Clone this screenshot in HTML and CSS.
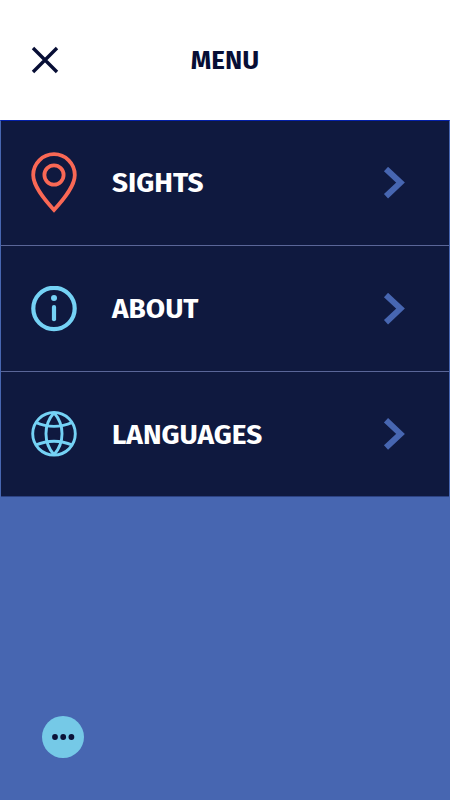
FILE: index.html
```html
<!DOCTYPE html>
<html lang="en">
<head>
    <meta charset="UTF-8">
    <meta name="viewport" content="width=device-width, initial-scale=1.0">
    <title>Menu</title>
    <link rel="stylesheet" href="styles.css">
</head>
<body>
    <header class="header">
        <button class="close-button" aria-label="Close menu">
            <svg width="28" height="28" viewBox="0 0 28 28">
                <path d="M2 2L26 26M26 2L2 26"/>
            </svg>
        </button>
        <h1>MENU</h1>
    </header>

    <nav class="menu">
        <a class="menu-item" href="#">
            <svg class="icon icon-pin" width="46" height="62" viewBox="0 0 46 62">
                <path d="M23 58C13 47 2.2 34 2.2 23A20.8 20.8 0 0 1 43.8 23C43.8 34 33 47 23 58Z"/>
                <circle cx="23" cy="23" r="9.6"/>
            </svg>
            <span class="label">SIGHTS</span>
            <svg class="arrow" width="22" height="32" viewBox="0 0 22 32">
                <path d="M3 2L17.5 15.6L3 29.2"/>
            </svg>
        </a>
        <a class="menu-item" href="#">
            <svg class="icon icon-info" width="46" height="46" viewBox="0 0 46 46">
                <circle cx="23" cy="22.5" r="20.7"/>
                <circle class="dot" cx="23" cy="12" r="3"/>
                <path d="M23 21V33.2"/>
            </svg>
            <span class="label">ABOUT</span>
            <svg class="arrow" width="22" height="32" viewBox="0 0 22 32">
                <path d="M3 2L17.5 15.6L3 29.2"/>
            </svg>
        </a>
        <a class="menu-item" href="#">
            <svg class="icon icon-globe" width="46" height="46" viewBox="0 0 46 46">
                <circle cx="23" cy="22.8" r="21.3"/>
                <path d="M23 1.8C12.3 13.8 12.3 31.8 23 43.8M23 1.8C33.7 13.8 33.7 31.8 23 43.8"/>
                <path d="M4.5 11.4Q23 19.4 41.5 11.4M4.5 34.2Q23 26.2 41.5 34.2"/>
            </svg>
            <span class="label">LANGUAGES</span>
            <svg class="arrow" width="22" height="32" viewBox="0 0 22 32">
                <path d="M3 2.3L17.5 15.9L3 29.5"/>
            </svg>
        </a>
    </nav>

    <footer class="footer">
        <button class="more-button" aria-label="More">
            <svg width="24" height="8" viewBox="0 0 24 8">
                <circle cx="4" cy="4" r="2.9"/>
                <circle cx="12.2" cy="4" r="2.9"/>
                <circle cx="20.4" cy="4" r="2.9"/>
            </svg>
        </button>
    </footer>
</body>
</html>
```

FILE: styles.css
```css
* {
    box-sizing: border-box;
}

body {
    display: flex;
    flex-direction: column;
    height: 100vh;
    margin: 0;
    font-family: "Fira Sans", "Noto Sans", sans-serif;
    background-color: #4766b1;
}

.header {
    display: grid;
    grid-template-columns: 90px 1fr 90px;
    align-items: center;
    height: 120px;
    background-color: #fff;
}

.header h1 {
    margin: 0;
    padding-top: 1px;
    color: #070e35;
    font-size: 26px;
    line-height: 34px;
    text-align: center;
}

.close-button {
    display: flex;
    justify-content: center;
    padding: 0;
    border: none;
    background: none;
    cursor: pointer;
}

.close-button path {
    fill: none;
    stroke: #070e35;
    stroke-width: 3.4;
}

.menu {
    border: 1px solid #4766b1;
    border-top-color: #0420a8;
    border-bottom: none;
}

.menu-item {
    display: flex;
    align-items: center;
    height: 126px;
    padding: 0 44px 0 30px;
    border-bottom: 1px solid #5a6698;
    background-color: #0f193f;
    color: #fff;
    text-decoration: none;
}

.menu-item:first-child {
    height: 125px;
}

.menu-item:last-child {
    height: 125px;
    border-bottom-color: #2c4283;
}

.icon {
    fill: none;
}

.icon-pin {
    stroke: #f96855;
    stroke-width: 3.8;
}

.icon-info {
    stroke: #75d2f5;
    stroke-width: 4.2;
    stroke-linecap: round;
}

.icon-info .dot {
    fill: #75d2f5;
    stroke: none;
}

.icon-globe {
    stroke: #75d2f5;
    stroke-width: 2.9;
}

.label {
    flex: 1;
    margin-left: 35px;
    font-size: 28px;
    font-weight: bold;
    line-height: 36px;
}

.menu-item:last-child .label {
    padding-top: 1px;
}

.arrow path {
    fill: none;
    stroke: #4766b1;
    stroke-width: 6;
}

.footer {
    display: flex;
    flex: 1;
    align-items: flex-end;
    padding: 0 41.5px;
}

.more-button {
    display: flex;
    justify-content: center;
    align-items: center;
    width: 42px;
    height: 42px;
    margin-bottom: 42px;
    padding: 0;
    border: none;
    border-radius: 50%;
    background-color: #75c9e7;
    cursor: pointer;
}

.more-button circle {
    fill: #0a1238;
}
```
